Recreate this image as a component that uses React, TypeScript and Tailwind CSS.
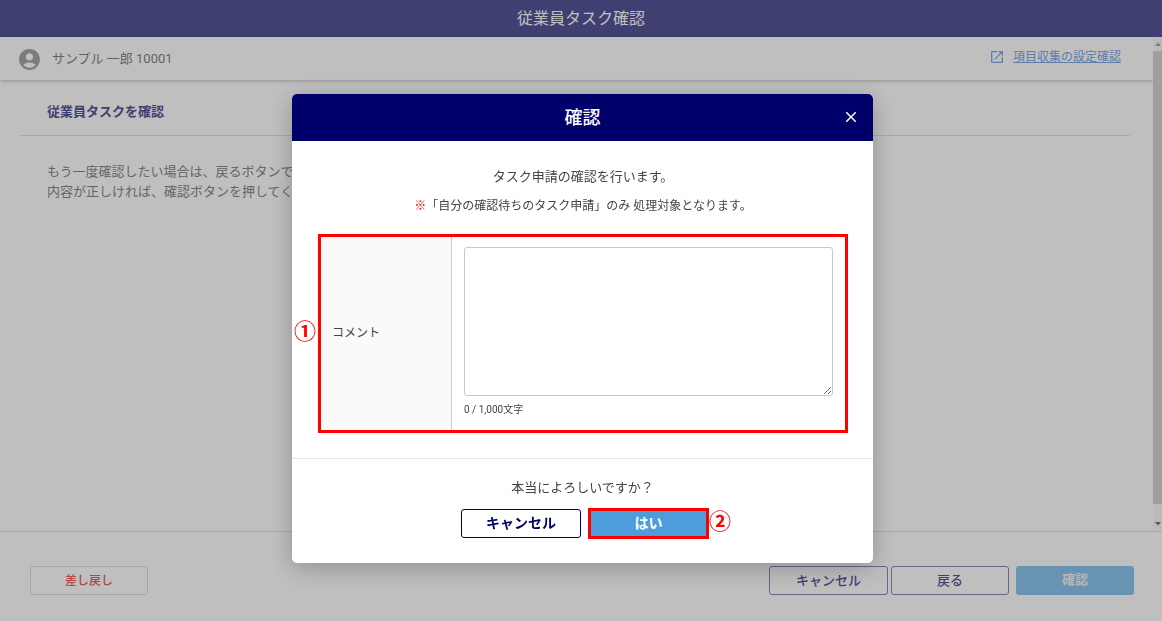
import React, { useState } from "react";
import { MdAccountCircle, MdClose, MdOpenInNew } from "react-icons/md";

const MAX_LENGTH = 1000;

const Scrollbar: React.FC = () => {
  return (
    <div className="flex w-[9px] shrink-0 flex-col items-center bg-[#f8f8f8]" aria-hidden="true">
      <svg width="8" height="14" viewBox="0 0 8 14" fill="#a8a8a8">
        <path d="M1 9h6L4 5.5z" />
      </svg>
      <div className="w-full flex-1 bg-[#d4d4d4]" />
      <svg width="8" height="27" viewBox="0 0 8 27" fill="#777777">
        <path d="M1 18h6L4 21.500z" />
      </svg>
    </div>
  );
};

const TaskPage: React.FC = () => {
  return (
    <div className="flex min-h-screen flex-col bg-white">
      <header className="flex h-[37px] items-center justify-center bg-[#555597] text-white">
        <h1 className="text-base">従業員タスク確認</h1>
      </header>

      <div className="flex flex-1">
        <main className="min-w-0 flex-1">
          <div className="flex h-[43px] items-center justify-between pl-[17px] pr-8 pt-px shadow-[0_1px_4px_rgba(0,0,0,0.25)]">
            <div className="flex items-center gap-[10px] text-[#858585]">
              <MdAccountCircle size={25} className="text-[#a4a4a4]" />
              <span className="text-[13px]">サンプル 一郎 10001</span>
            </div>
            <a href="#" className="flex items-center gap-2 pb-1 text-xs text-[#7fa8e2]">
              <MdOpenInNew size={16} />
              <span className="underline">項目収集の設定確認</span>
            </a>
          </div>

          <section className="ml-5 mr-[23px]">
            <h2 className="border-b border-[#e2e2e2] px-[27px] pb-[13px] pt-[22px] text-[13px] font-bold leading-5 text-[#555597]">
              従業員タスクを確認
            </h2>
            <p className="px-[27px] pt-[26px] text-[13px] leading-5 text-[#888888]">
              もう一度確認したい場合は、戻るボタンで
              <br />
              内容が正しければ、確認ボタンを押してく
            </p>
          </section>
        </main>
        <Scrollbar />
      </div>

      <footer className="flex h-[90px] items-center justify-between border-t border-[#e2e2e2] pl-[30px] pr-7 pt-2">
        <button type="button" className="h-[29px] w-[118px] rounded-[3px] border border-[#e0e0e0] text-xs font-medium text-[#ef5c5c]">
          差し戻し
        </button>
        <div className="flex">
          <button type="button" className="h-[29px] w-[119px] rounded-[3px] border border-[#8888b6] text-[13px] font-medium text-[#555597]">
            キャンセル
          </button>
          <button type="button" className="ml-[3px] h-[29px] w-[118px] rounded-[3px] border border-[#8888b6] text-[13px] font-medium text-[#555597]">
            戻る
          </button>
          <button type="button" className="ml-[7px] h-[29px] w-[118px] rounded-[3px] bg-[#8cc4ee] pb-px text-[13px] font-bold text-[#f4f4f4]">
            確認
          </button>
        </div>
      </footer>
    </div>
  );
};

const ConfirmDialog: React.FC = () => {
  const [comment, setComment] = useState("");

  return (
    <div className="fixed inset-0 flex items-center justify-center bg-black/25 pl-[3px] pt-9">
      <div
        role="dialog"
        aria-labelledby="dialog-title"
        className="w-[581px] rounded-[5px] bg-white text-[#444444] shadow-[0_5px_25px_rgba(0,0,0,0.25)]"
      >
        <div className="relative flex h-[47px] items-center justify-center rounded-t-[5px] bg-[#00006a] text-white">
          <h2 id="dialog-title" className="text-lg font-medium">確認</h2>
          <button type="button" aria-label="閉じる" className="absolute right-[13px] top-[14px]">
            <MdClose size={18} />
          </button>
        </div>

        <div className="pb-[25px] pl-[26px] pr-[25px] pt-[26px] text-center">
          <p className="text-[13px] leading-5">タスク申請の確認を行います。</p>
          <p className="mt-[9px] text-xs leading-5">
            <span className="font-bold text-[#ff0000]">※</span>
            「自分の確認待ちのタスク申請」のみ 処理対象となります。
          </p>

          <div className="relative mt-[18px] flex h-[199px] border-[3px] border-[#ff0000] text-left">
            <label
              htmlFor="comment"
              className="flex w-[131px] shrink-0 items-center border-r border-[#cccccc] bg-[#fafafa] pb-[2px] pl-[11px] text-xs"
            >
              コメント
            </label>
            <div className="flex-1 px-3 pt-[10px]">
              <textarea
                id="comment"
                value={comment}
                maxLength={MAX_LENGTH}
                onChange={(e) => setComment(e.target.value)}
                className="block h-[149px] w-full rounded-[3px] border border-[#c8c8c8] p-2 text-xs"
              />
              <p className="mt-[6px] text-[10px] leading-4">
                {comment.length} / 1,000文字
              </p>
            </div>
            <span className="absolute -left-[27px] top-[83px] text-[22px] font-bold leading-6 text-[#ff0000]">①</span>
          </div>
        </div>

        <div className="border-t border-[#e5e5e5] pb-[25px] pt-[19px] text-center">
          <p className="text-[13px] leading-5">本当によろしいですか？</p>
          <div className="mt-[11px] flex justify-center gap-2 pl-1">
            <button type="button" className="h-[29px] w-[120px] rounded-[3px] border border-[#00006a] pb-px text-sm font-bold text-[#00006a]">
              キャンセル
            </button>
            <div className="relative">
              <button type="button" className="h-[29px] w-[119px] bg-[#4d9ddd] pb-px text-sm font-bold text-white">
                はい
              </button>
              <div className="pointer-events-none absolute -inset-px border-[3px] border-[#ff0000]" />
              <span className="absolute left-full top-px pl-px text-[22px] font-bold leading-6 text-[#ff0000]">②</span>
            </div>
          </div>
        </div>
      </div>
    </div>
  );
};

export default function App() {
  return (
    <div className="font-['Roboto','Noto_Sans_CJK_JP',sans-serif]">
      <TaskPage />
      <ConfirmDialog />
    </div>
  );
}
